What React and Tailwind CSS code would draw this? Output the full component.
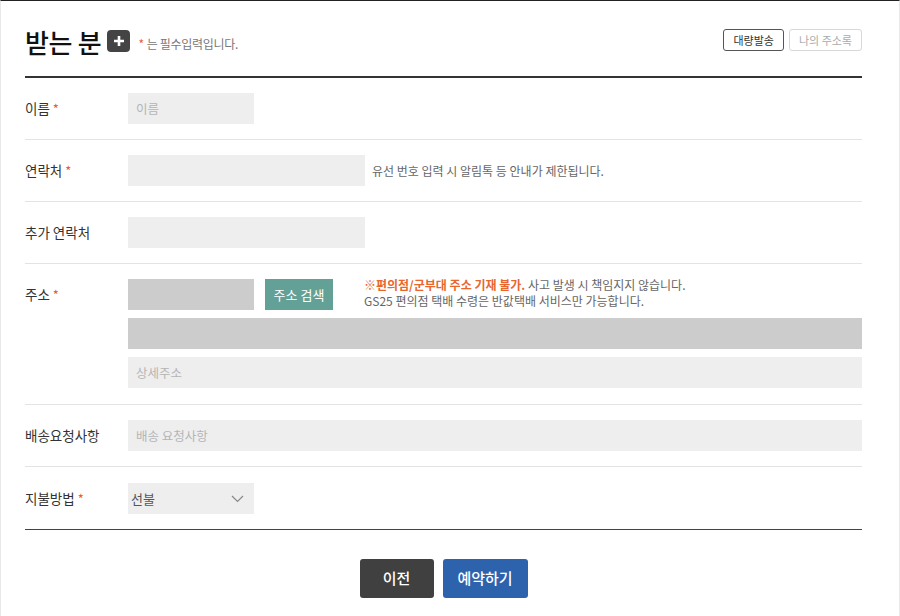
import React from 'react';

const font = { fontFamily: '"Noto Sans CJK KR", "Noto Sans", sans-serif' };

const Req = () => <span className="ml-[3px] text-[#e8602c] text-[13px]">*</span>;

const Row = ({ label, required, children, last, className = '' }) => (
    <div className={`flex items-start pt-[15px] pb-[15px] ${last ? '' : 'border-b border-[#e3e3e3]'} ${className}`}>
        <div className="w-[103px] shrink-0 h-[31px] flex items-center text-[13.5px] text-[#333]">
            {label}
            {required && <Req />}
        </div>
        <div className="flex-1 min-w-0">{children}</div>
    </div>
);

export default function App() {
    return (
        <div className="w-[900px] h-[616px] bg-white border-t border-[#222] border-l border-l-[#e8e8e8] border-r border-r-[#e8e8e8]" style={font}>
            <div className="pl-[24px] pr-[37px]">
                {/* Header */}
                <div className="h-[77px] flex items-center justify-between border-b-2 border-[#333] pt-[5px]">
                    <div className="flex items-center">
                        <h2 className="text-[26px] font-medium text-[#111] tracking-[-0.3px]">받는 분</h2>
                        <span className="ml-[6px] w-[23px] h-[22px] rounded-[4px] bg-[#444] flex items-center justify-center">
                            <svg width="12" height="12" viewBox="0 0 12 12">
                                <path d="M6 1v10M1 6h10" stroke="#fff" strokeWidth="2.6" />
                            </svg>
                        </span>
                        <span className="ml-[8px] mt-[6px] text-[12px] text-[#777] flex items-center tracking-[-0.3px]">
                            <span className="text-[#e8602c] mr-[3px]">*</span>는 필수입력입니다.
                        </span>
                    </div>
                    <div className="flex items-center gap-[5px] mb-[2px]">
                        <button className="h-[22px] px-[9px] border border-[#555] rounded-[3px] text-[11px] text-[#333] bg-white">대량발송</button>
                        <button className="h-[22px] px-[9px] border border-[#d8d8d8] rounded-[3px] text-[11px] text-[#aaa] bg-white">나의 주소록</button>
                    </div>
                </div>

                <Row label="이름" required>
                    <input className="w-[126px] h-[31px] bg-[#eeeeee] px-[8px] text-[12.5px] placeholder:text-[#b5b5b5] outline-none" placeholder="이름" />
                </Row>

                <Row label="연락처" required>
                    <div className="flex items-center">
                        <input className="w-[237px] h-[31px] bg-[#eeeeee] px-[8px] text-[13px] outline-none" />
                        <span className="ml-[7px] text-[12px] text-[#666]">유선 번호 입력 시 알림톡 등 안내가 제한됩니다.</span>
                    </div>
                </Row>

                <Row label="추가 연락처">
                    <input className="w-[237px] h-[31px] bg-[#eeeeee] px-[8px] text-[13px] outline-none" />
                </Row>

                <Row label="주소" required className="pb-[16px]">
                    <div className="flex flex-col gap-[8px]">
                        <div className="flex items-start">
                            <div className="w-[126px] h-[31px] bg-[#cccccc]" />
                            <button className="ml-[11px] w-[68px] h-[31px] bg-[#63a196] text-white text-[13px]">주소 검색</button>
                            <div className="ml-[31px] text-[12px] leading-[16px] text-[#666] -mt-[2px]">
                                <p><span className="text-[#e8672d] font-bold">※편의점/군부대 주소 기재 불가.</span> 사고 발생 시 책임지지 않습니다.</p>
                                <p>GS25 편의점 택배 수령은 반값택배 서비스만 가능합니다.</p>
                            </div>
                        </div>
                        <div className="w-full h-[31px] bg-[#cccccc]" />
                        <input className="w-full h-[31px] bg-[#eeeeee] px-[8px] text-[12.5px] placeholder:text-[#b5b5b5] outline-none" placeholder="상세주소" />
                    </div>
                </Row>

                <Row label="배송요청사항">
                    <input className="w-full h-[31px] bg-[#eeeeee] px-[8px] text-[12.5px] placeholder:text-[#b5b5b5] outline-none" placeholder="배송 요청사항" />
                </Row>

                <Row label="지불방법" required last className="pt-[16px] pb-[14px]">
                    <div className="w-[126px] h-[31px] bg-[#eeeeee] flex items-center justify-between pl-[3px] pr-[10px]">
                        <span className="text-[13px] text-[#555]">선불</span>
                        <svg width="13" height="8" viewBox="0 0 13 8">
                            <path d="M1 1l5.5 5.5L12 1" fill="none" stroke="#888" strokeWidth="1.2" />
                        </svg>
                    </div>
                </Row>

                <div className="border-t border-[#444]" />

                <div className="flex justify-center gap-[9px] mt-[29px]">
                    <button className="w-[74px] h-[39px] rounded-[3px] bg-[#404040] text-white text-[15px] font-medium">이전</button>
                    <button className="w-[85px] h-[39px] rounded-[3px] bg-[#2d63ad] text-white text-[15px] font-medium">예약하기</button>
                </div>
            </div>
        </div>
    );
}
